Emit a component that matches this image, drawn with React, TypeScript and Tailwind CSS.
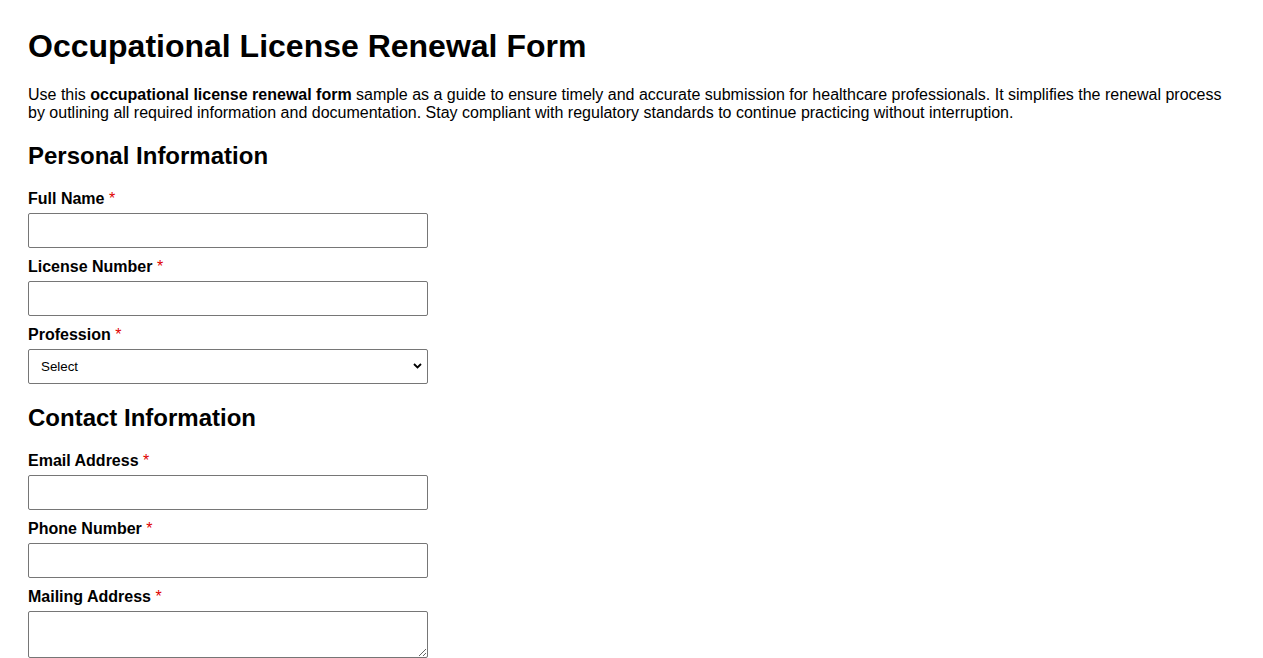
import React from "react";

const font = { fontFamily: '"Liberation Sans", Arial, sans-serif' };

function Label({ children }: { children: React.ReactNode }) {
  return (
    <label className="block text-[16px] leading-[18px] font-bold text-black">
      {children} <span className="text-[#e00000] font-normal text-[16px]">*</span>
    </label>
  );
}

function Field({ label, children }: { label: string; children: React.ReactNode }) {
  return (
    <div className="flex flex-col gap-[5px]">
      <Label>{label}</Label>
      {children}
    </div>
  );
}

const inputCls =
  "block w-[400px] h-[35px] border border-[#767676] rounded-[2px] bg-white px-2 text-[13.33px]";

export default function App() {
  return (
    <div style={font} className="bg-white text-black px-[28px] pt-[28px] min-h-screen">
      <h1 className="text-[32px] leading-[37px] font-bold">Occupational License Renewal Form</h1>
      <p className="mt-[21px] text-[16px] leading-[18px]">
        Use this <b>occupational license renewal form</b> sample as a guide to ensure timely and accurate submission for
        healthcare professionals. It simplifies the renewal process by outlining all required information and
        documentation. Stay compliant with regulatory standards to continue practicing without interruption.
      </p>
      <h2 className="mt-[20px] text-[24px] leading-[28px] font-bold">Personal Information</h2>
      <div className="mt-[20px] flex flex-col gap-[10px]">
        <Field label="Full Name">
          <input type="text" className={inputCls} />
        </Field>
        <Field label="License Number">
          <input type="text" className={inputCls} />
        </Field>
        <Field label="Profession">
          <div className="relative w-[400px]">
            <select className="appearance-none block w-[400px] h-[35px] border border-[#767676] rounded-[2px] bg-white pl-[12px] text-[13.33px] text-black">
              <option>Select</option>
            </select>
            <svg
              className="absolute right-[6px] top-[14px] pointer-events-none"
              width="9"
              height="6"
              viewBox="0 0 9 6"
            >
              <path d="M1 1 L4.5 4.5 L8 1" fill="none" stroke="#000" strokeWidth="1.8" />
            </svg>
          </div>
        </Field>
      </div>
      <h2 className="mt-[20px] text-[24px] leading-[28px] font-bold">Contact Information</h2>
      <div className="mt-[20px] flex flex-col gap-[10px]">
        <Field label="Email Address">
          <input type="email" className={inputCls} />
        </Field>
        <Field label="Phone Number">
          <input type="tel" className={inputCls} />
        </Field>
        <Field label="Mailing Address">
          <textarea className="block w-[400px] h-[47px] border border-[#767676] rounded-[2px] bg-white p-1 text-[13.33px]" />
        </Field>
      </div>
    </div>
  );
}
